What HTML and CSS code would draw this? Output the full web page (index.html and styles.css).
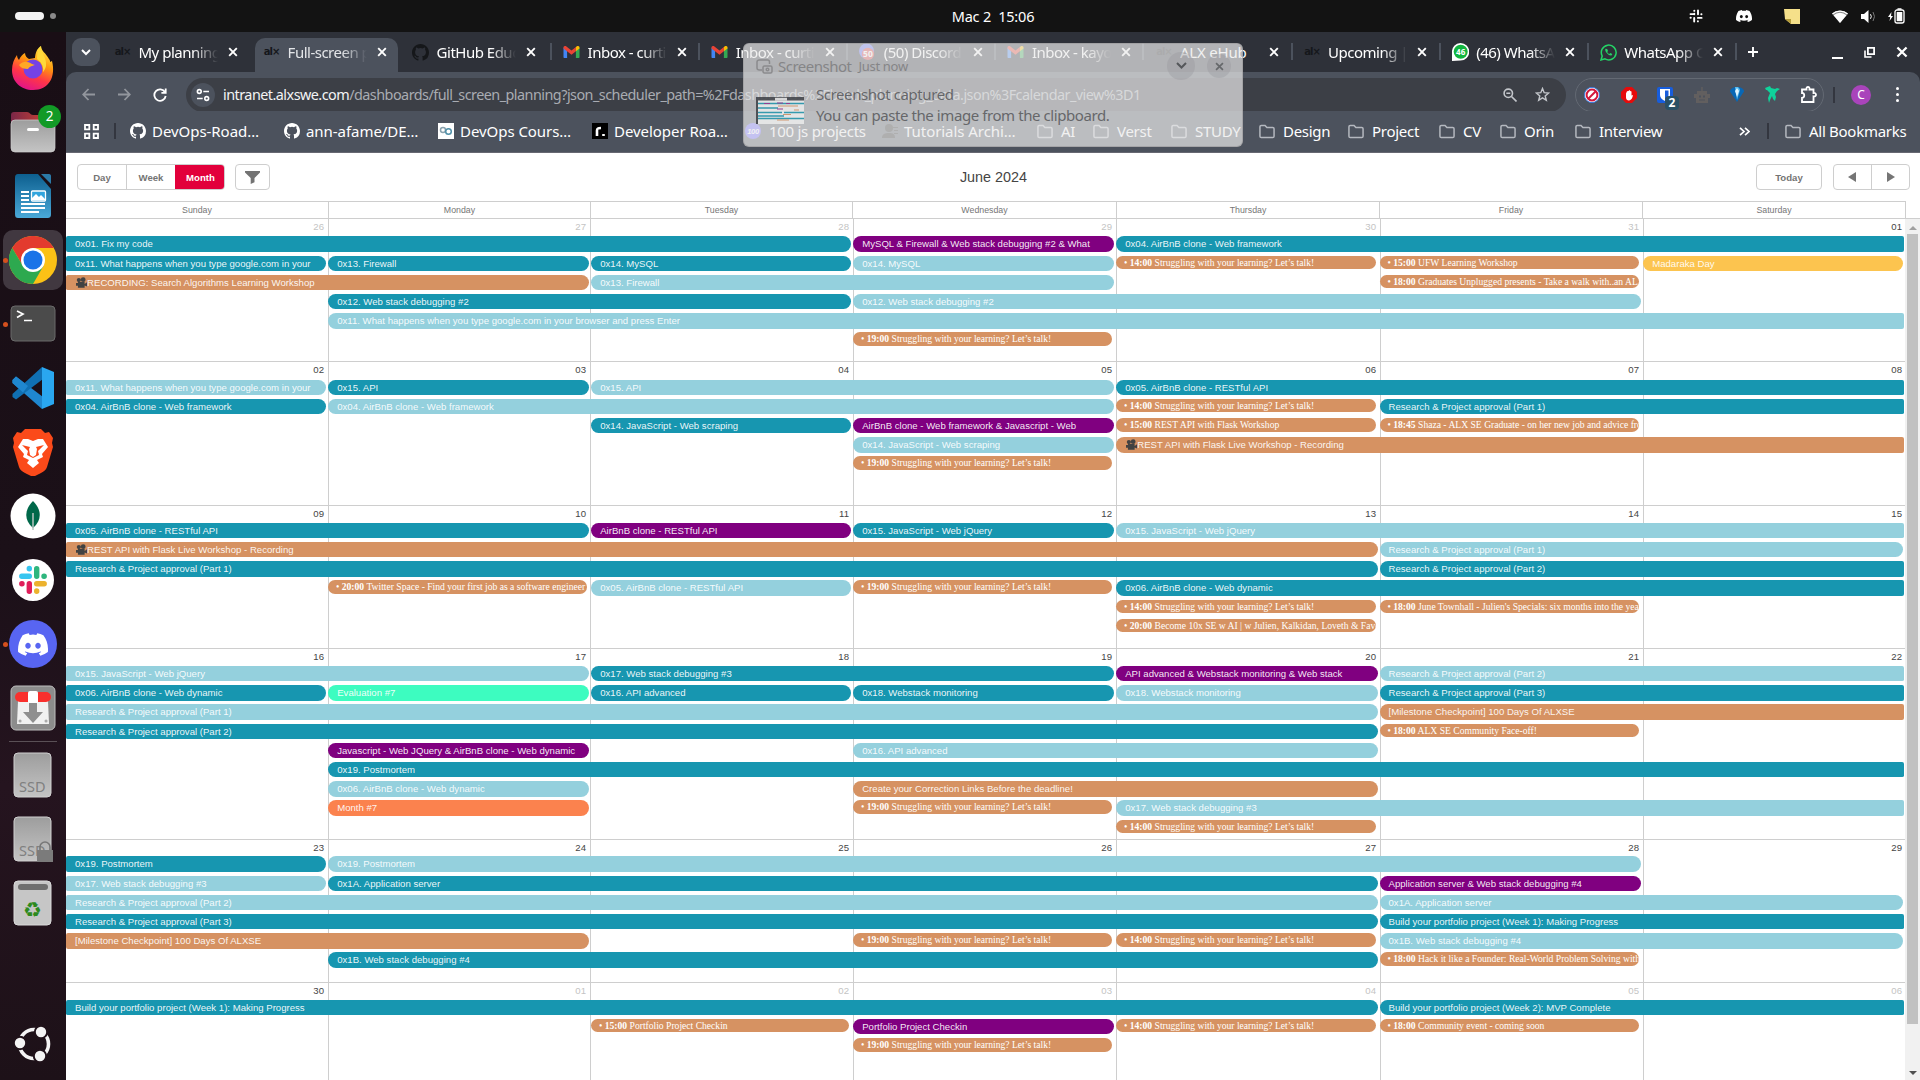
FILE: index.html
```html
<!DOCTYPE html>
<html lang="en">
<head>
<meta charset="utf-8">
<title>Full-screen planning</title>
<link rel="stylesheet" href="styles.css">
</head>
<body>
<svg class="defs" width="0" height="0">
  <defs>
    <linearGradient id="ff" x1="0.8" y1="0" x2="0.4" y2="1"><stop offset="0" stop-color="#fff44f"/><stop offset=".4" stop-color="#ff980e"/><stop offset=".7" stop-color="#ff3647"/><stop offset="1" stop-color="#e31587"/></linearGradient>
    <linearGradient id="gray" x1="0" y1="0" x2="0" y2="1"><stop offset="0" stop-color="#9d9d9d"/><stop offset="1" stop-color="#c4c4c4"/></linearGradient>
    <linearGradient id="folderback" x1="0" y1="0" x2="1" y2="0"><stop offset="0" stop-color="#7b2748"/><stop offset="1" stop-color="#d9482f"/></linearGradient>
    <linearGradient id="writer" x1="0" y1="0" x2="0" y2="1"><stop offset="0" stop-color="#0d5f8f"/><stop offset="1" stop-color="#4aa9d8"/></linearGradient>
    <symbol id="x" viewBox="0 0 10 10"><path d="M1.2 1.2l7.6 7.6M8.8 1.2L1.2 8.8" stroke="currentColor" stroke-width="1.9" fill="none"/></symbol>
    <symbol id="folder" viewBox="0 0 17 15"><path d="M1 12.6V2.4c0-.8.6-1.4 1.4-1.4h4l2 2.2h6.2c.8 0 1.4.6 1.4 1.4v8c0 .8-.6 1.4-1.4 1.4H2.4c-.8 0-1.4-.6-1.4-1.4z" fill="none" stroke="#b4b8bf" stroke-width="1.6"/></symbol>
    <symbol id="github" viewBox="0 0 16 16"><path fill="currentColor" d="M8 0C3.58 0 0 3.58 0 8c0 3.54 2.29 6.53 5.47 7.59.4.07.55-.17.55-.38 0-.19-.01-.82-.01-1.49-2.01.37-2.53-.49-2.69-.94-.09-.23-.48-.94-.82-1.13-.28-.15-.68-.52-.01-.53.63-.01 1.08.58 1.23.82.72 1.21 1.87.87 2.33.66.07-.52.28-.87.51-1.07-1.78-.2-3.64-.89-3.64-3.95 0-.87.31-1.59.82-2.15-.08-.2-.36-1.02.08-2.12 0 0 .67-.21 2.2.82a7.6 7.6 0 014 0c1.53-1.04 2.2-.82 2.2-.82.44 1.1.16 1.92.08 2.12.51.56.82 1.27.82 2.15 0 3.07-1.87 3.75-3.65 3.95.29.25.54.73.54 1.48 0 1.07-.01 1.93-.01 2.2 0 .21.15.46.55.38A8.01 8.01 0 0016 8c0-4.42-3.58-8-8-8z"/></symbol>
    <symbol id="gmail" viewBox="0 0 16 12"><path fill="#4285f4" d="M0 1.6V11c0 .6.4 1 1 1h2.6V4.4z"/><path fill="#34a853" d="M16 1.6V11c0 .6-.4 1-1 1h-2.600V4.400z"/><path fill="#ea4335" d="M0 1.600C0 .2 1.500-.5 2.600.3L8 4.500 12.400 1v4.200L8 8.700 0 2.500z"/><path fill="#fbbc04" d="M12.400 1l1-.7C14.500-.5 16 .2 16 1.600v.9l-3.600 2.700z"/></symbol>
    <symbol id="discord" viewBox="0 0 24 18"><path fill="currentColor" fill-rule="evenodd" d="M20.300 1.500A19.700 19.700 0 0015.400 0l-.7 1.300a18.300 18.300 0 00-5.400 0L8.600 0a19.700 19.700 0 00-4.900 1.500C.6 6.100-.3 10.600.1 15a19.900 19.900 0 006 3l1.300-2-2-1 .5-.400a14.200 14.200 0 0012.200 0l.5.400-2 1 1.300 2a19.900 19.900 0 006-3c.5-5.200-.8-9.700-3.600-13.500zM8 12.300c-1.200 0-2.200-1.100-2.200-2.400s1-2.400 2.200-2.400 2.200 1.100 2.200 2.400-1 2.400-2.200 2.400zm8 0c-1.200 0-2.200-1.100-2.200-2.400s1-2.400 2.200-2.400 2.200 1.100 2.200 2.400-1 2.400-2.200 2.400z"/></symbol>
    <symbol id="ssd" viewBox="0 0 40 46"><rect x="1" y="1" width="37" height="44" rx="4" fill="url(#gray)" stroke="#d0d0d0"/></symbol>
  </defs>
</svg>

<header class="topbar">
  <div class="spaces"><i class="pill"></i><i class="dot"></i></div>
  <div class="clock">Mac 2&nbsp; 15:06</div>
  <div class="tray">
    <svg width="14" height="14" viewBox="0 0 14 14" fill="none" stroke="#fff" stroke-width="1.900" stroke-linecap="round"><path d="M5.300 4.800V5.300M5.300 1.600v.3M1.500 5.100h3.800M9 1.500v3.800M12.300 5.200h.2M8.900 8.900h3.700M8.900 12.200v.2M5.200 8.900v3.700M1.500 8.800h.3"/></svg>
    <svg class="t-discord" width="16" height="12"><use href="#discord"/></svg>
    <svg class="t-note" width="16" height="15" viewBox="0 0 16 15"><path d="M0 0h16v15H7l-6-5z" fill="#f5e08a"/><path d="M1 10h6v5z" fill="#b49c3b"/></svg>
    <svg class="t-wifi" width="16" height="13" viewBox="0 0 16 13"><path d="M0 3.500a12 12 0 0116 0L8 13z" fill="#888"/><path d="M1.500 5.300a9.500 9.500 0 0113 0L8 13z" fill="#fff"/><path d="M0 3.500a12 12 0 0116 0l-.9 1.100a10.500 10.500 0 00-14.200 0z" fill="#fff"/></svg>
    <svg class="t-vol" width="15" height="13" viewBox="0 0 15 13"><path d="M0 4h3l4.500-4v13L3 9H0z" fill="#fff"/><path d="M9.500 4.200q1.600 2.300 0 4.600" stroke="#fff" fill="none"/><path d="M12 2q3 4.500 0 9" stroke="#777" fill="none"/></svg>
    <svg class="t-bat" width="17" height="16" viewBox="0 0 17 16"><path d="M3.500 4L0 9h2.200l-.7 4L5 8H3z" fill="#fff"/><rect x="7" y="2" width="9" height="13" rx="2" fill="none" stroke="#fff" stroke-width="1.300"/><rect x="8.700" y="4" width="5.600" height="9.200" fill="#fff"/><path d="M9.500 1h4" stroke="#fff" stroke-width="1.500"/></svg>
  </div>
</header>

<div class="desktop">
<aside class="dock">
  <div class="app"><svg width="46" height="46" viewBox="0 0 46 46"><path d="M23 45C11 45 2 37 2 25c0-6 2-11 5-15 0 2 1 4 2 5 1-3 4-6 6-7 0 3 2 5 4 6l6-1C25 9 27 3 31 1c0 5 5 7 8 13 1 1 1 2 1 3l2-1c4 16-3 29-19 29z" fill="url(#ff)"/><circle cx="23" cy="24" r="9.500" fill="#7542e5"/><path d="M9 20c4-4 8-4 13-1l3 1c-3 1-5 1-7 4-4 0-7-1-9-4z" fill="#ffa826"/><path d="M31 1c0 8 6 11 5 20-1 4-3 6-3 6 1-6-2-10-6-13 0-5 1-10 4-13z" fill="#ffd93b"/></svg></div>
  <div class="app"><svg width="46" height="42" viewBox="0 4 46 42"><path d="M1 24V8c0-2 1-3 3-3h13c3 0 3 3 6 3h18c2 0 3 2 3 3v13z" fill="url(#folderback)"/><rect x="1" y="13" width="44" height="32" rx="4" fill="url(#gray)" stroke="#cfcfcf" stroke-width=".7"/><rect x="17" y="21" width="12" height="3" rx="1.500" fill="#fff"/></svg><b class="count">2</b></div>
  <div class="app"><svg width="38" height="46" viewBox="0 0 38 46"><path d="M4 1h20l13 15v25c0 3-1 4-4 4H4c-2 0-3-1-3-4V5c0-3 1-4 3-4z" fill="url(#writer)"/><path d="M27 1h8c1.500 0 2 1 2 2v8z" fill="#2b7aa8"/><path d="M7 19h8M7 23h8M7 27h8M7 31h24M7 35h24M7 39h18" stroke="#fff" stroke-width="2"/><rect x="17.500" y="18" width="14" height="10" rx="1" fill="#33a5dd" stroke="#fff" stroke-width="1.300"/><path d="M18 27v-2l4-4 3 3 2-2 4 4v1z" fill="#fff"/></svg></div>
  <div class="app running active"><svg width="48" height="48" viewBox="0 0 48 48"><circle cx="24" cy="24" r="24" fill="#fbc116"/><path d="M24 12h20.800A24 24 0 003.200 12L14 30z" fill="#e33b2e"/><path d="M3.200 12A24 24 0 0024 48l10.400-18H14z" fill="#2da94f"/><circle cx="24" cy="24" r="12" fill="#fff"/><circle cx="24" cy="24" r="9.500" fill="#1a73e8"/></svg></div>
  <div class="app running"><svg width="46" height="38" viewBox="0 0 46 38"><rect x="1" y="1" width="44" height="35" rx="4" fill="#4b4b4b" stroke="#6a6a6a"/><path d="M7 6l6 3-6 3.500M14 15.500h8" stroke="#fff" stroke-width="1.700" fill="none"/></svg></div>
  <div class="app"><svg width="44" height="44" viewBox="0 0 44 44"><path d="M5 10.500L1.500 14v3L31 43l1-12z" fill="#1f87cf"/><path d="M31 1L1.500 28v3L5 33.500 32 13z" fill="#1070b3"/><path d="M5 10.500L1.500 14v3L12 26.500l5-6.500z" fill="#1f87cf"/><path d="M31 1l12 5v32l-12 5z" fill="#2aa7f0"/></svg></div>
  <div class="app"><svg width="42" height="48" viewBox="0 0 42 48"><path d="M13 1h16l4 4 4-1 4 6-1 5 1 4-6 20c-1 3-3 4-6 6l-8 4-8-4c-3-2-5-3-6-6L1 19l1-4-1-5 4-6 4 1z" fill="#fb4a1a"/><path d="M21 13l-5-2-5 0-5 8 6 7-1 3 6 3-2 3 6 5 6-5-2-3 6-3-1-3 6-7-5-8h-5z" fill="#fff"/><path d="M10 17l8 2-1 2 1 6 3 2 3-2 1-6-1-2 8-2-6 6 1 4-6 3-6-3 1-4z" fill="#fb4a1a"/><path d="M18 20h6l-1 7-2 1-2-1z" fill="#fff"/></svg></div>
  <div class="app"><svg width="46" height="46" viewBox="0 0 46 46"><circle cx="23" cy="23" r="22.500" fill="#fff"/><path d="M23 8c9 9 9 19 0 27-9-8-9-18 0-27z" fill="#00684a"/><path d="M23 20v17" stroke="#b8c4c2" stroke-width="1.500"/></svg></div>
  <div class="app"><svg width="42" height="42" viewBox="0 0 42 42"><circle cx="21" cy="21" r="21" fill="#fff"/><g stroke-width="5.400" stroke-linecap="round"><path d="M17.300 9.500v.2M9.800 17.300h7.500" stroke="#36c5f0"/><path d="M24.700 9.800v7.500M32 17.300h.2" stroke="#2eb67d"/><path d="M24.700 24.700h7.500M24.700 32v.2" stroke="#ecb22e"/><path d="M17.300 24.700v7.500M9.800 24.700h.2" stroke="#e01e5a"/></g></svg></div>
  <div class="app running"><svg width="48" height="48" viewBox="0 0 48 48"><circle cx="24" cy="24" r="24" fill="#5865f2"/><svg x="9" y="13" width="30" height="23" color="#fff"><use href="#discord"/></svg></svg></div>
  <div class="app"><svg width="46" height="46" viewBox="0 0 46 46"><rect x="1" y="1" width="44" height="44" rx="5" fill="#8c8c8c" stroke="#bdbdbd"/><path d="M8 16h30l1 23H7z" fill="#f1f1f1"/><rect x="5" y="7" width="36" height="10" rx="5" fill="#f9302d"/><rect x="18" y="6" width="10" height="13" rx="2" fill="#fff"/><path d="M19 18h8v9h6L23 38 13 27h6z" fill="#8f8f8f"/><path d="M10 36h.1M36 36h.1" stroke="#aaa" stroke-width="3" stroke-linecap="round"/></svg></div>
  <hr>
  <div class="app first"><svg width="40" height="46"><use href="#ssd"/><text x="6" y="40" class="ssd">SSD</text></svg></div>
  <div class="app"><svg width="40" height="46"><use href="#ssd"/><text x="6" y="40" class="ssd">SSD</text><path d="M27 35v-4a5 5 0 0110 0v4" fill="none" stroke="#777" stroke-width="1.600"/><path d="M24 34h16v12H24z" fill="#7b7b7b"/></svg></div>
  <div class="app"><svg width="40" height="46" viewBox="0 0 40 46"><rect x="1" y="1" width="37" height="44" rx="4" fill="#c6c6c6" stroke="#dadada"/><rect x="5" y="4" width="30" height="6" rx="3" fill="#6f6f6f"/><text x="19.500" y="37" class="recycle">♻</text></svg></div>
  <div class="app apps-grid"><svg width="38" height="38" viewBox="0 0 38 38"><circle cx="20" cy="19" r="14.500" fill="none" stroke="#f4f4f4" stroke-width="3.600"/><g fill="#f4f4f4" stroke="#20121a" stroke-width="2"><circle cx="6" cy="18" r="6.200"/><circle cx="27" cy="7" r="6.200"/><circle cx="26" cy="31" r="6.200"/></g></svg></div>
</aside>

<main class="browser">
  <div class="tabs">
    <div class="tabdrop"><svg width="10" height="7" viewBox="0 0 10 7"><path d="M1 1l4 4 4-4" fill="none" stroke="#fff" stroke-width="2"/></svg></div>
    <div class="tab"><span class="alx">al×</span><span class="tt">My planning</span><svg class="close"><use href="#x"/></svg></div>
    <div class="tab on"><span class="alx">al×</span><span class="tt">Full-screen p</span><svg class="close"><use href="#x"/></svg></div>
    <div class="tab nosep"><svg class="fav dark" width="17" height="17"><use href="#github"/></svg><span class="tt">GitHub Educ</span><svg class="close"><use href="#x"/></svg></div>
    <div class="tab"><svg class="fav" width="15" height="12"><use href="#gmail"/></svg><span class="tt">Inbox - curtis</span><svg class="close"><use href="#x"/></svg></div>
    <div class="tab"><svg class="fav" width="15" height="12"><use href="#gmail"/></svg><span class="tt">Inbox - curtis</span><svg class="close"><use href="#x"/></svg></div>
    <div class="tab"><svg class="fav" width="18" height="18" viewBox="0 0 18 18"><circle cx="8" cy="8" r="8" fill="#5865f2"/><circle cx="9.500" cy="11" r="6.500" fill="#d83a3e"/><text x="9.500" y="14.500" class="n50">50</text></svg><span class="tt">(50) Discord</span><svg class="close"><use href="#x"/></svg></div>
    <div class="tab"><svg class="fav" width="15" height="12"><use href="#gmail"/></svg><span class="tt">Inbox - kayo</span><svg class="close"><use href="#x"/></svg></div>
    <div class="tab"><span class="alx">al×</span><span class="tt wide">ALX eHub</span><svg class="close"><use href="#x"/></svg></div>
    <div class="tab"><span class="alx">al×</span><span class="tt">Upcoming |</span><svg class="close"><use href="#x"/></svg></div>
    <div class="tab"><svg class="fav" width="17" height="18" viewBox="0 0 17 18"><path d="M8.500 0a8.500 8.500 0 110 17.500L0 18V9a8.500 8.500 0 018.500-9z" fill="#fff"/><circle cx="8.700" cy="8.800" r="7" fill="#12b53f"/><text x="8.700" y="12" class="n46">46</text></svg><span class="tt">(46) WhatsA</span><svg class="close"><use href="#x"/></svg></div>
    <div class="tab"><svg class="fav" width="17" height="17" viewBox="0 0 17 17"><path d="M1 16l1.200-4A7.400 7.400 0 115 14.900z" fill="none" stroke="#25d366" stroke-width="1.500"/><path d="M5.500 4.800c-1.600 2 3.500 8 6.200 6.500l.6-1.300-2-1-1 1c-1-.4-1.700-1.200-2.100-2.100l.8-.9-.8-2z" fill="#25d366"/></svg><span class="tt">WhatsApp C</span><svg class="close"><use href="#x"/></svg></div>
    <div class="tab plus"><svg width="12" height="12" viewBox="0 0 12 12"><path d="M6 1v10M1 6h10" stroke="#fff" stroke-width="1.900"/></svg></div>
    <div class="wins">
      <svg width="11" height="14" viewBox="0 0 11 14"><path d="M0 13h11" stroke="#fff" stroke-width="2"/></svg>
      <svg width="11" height="11" viewBox="0 0 11 11"><path d="M3.900.900h6.200v6.200H3.900z" fill="none" stroke="#fff" stroke-width="1.800"/><path d="M1 3.500V10h6.500" fill="none" stroke="#fff" stroke-width="1.600"/></svg>
      <svg width="12" height="12"><use href="#x"/></svg>
    </div>
  </div>

  <div class="nav">
    <div class="navbtns">
      <svg class="dim" width="13" height="13" viewBox="0 0 13 13"><path d="M6.500 1L1.200 6.500l5.300 5.500M1.200 6.500H13" /></svg>
      <svg class="dim" width="13" height="13" viewBox="0 0 13 13"><path d="M6.500 1l5.300 5.500L6.500 12M11.800 6.500H0"/></svg>
      <svg width="14" height="14" viewBox="0 0 14 14"><path d="M12 4.200A5.700 5.700 0 1012.700 8M12.700 .5v4.300H8.400"/></svg>
    </div>
    <div class="omnibox">
      <span class="site"><svg width="14" height="14" viewBox="0 0 14 14" fill="none" stroke="#fff" stroke-width="1.600"><circle cx="3.300" cy="3.500" r="1.900"/><path d="M7.300 3.500H13M1 10.500h5.700"/><circle cx="10.700" cy="10.500" r="1.900"/></svg></span>
      <span class="url"><b>intranet.alxswe.com</b>/dashboards/full_screen_planning?json_scheduler_path=%2Fdashboards%2Fbatch_planning_data.json%3Fcalendar_view%3D1</span>
      <svg class="mag" width="14" height="14" viewBox="0 0 14 14" fill="none" stroke="#c3c6cb" stroke-width="1.600"><circle cx="5.300" cy="5.300" r="4.200"/><path d="M8.500 8.500l5 5M3.300 5.300h4"/></svg>
      <svg class="star" width="15" height="15" viewBox="0 0 15 15"><path d="M7.500 1.500l1.700 4.200 4.500.3-3.500 2.900 1.100 4.400-3.800-2.400-3.800 2.400 1.100-4.400L1.300 6l4.500-.3z" fill="none" stroke="#c3c6cb" stroke-width="1.400"/></svg>
    </div>
    <div class="exts">
      <svg width="16" height="16" viewBox="0 0 16 16"><circle cx="8" cy="8" r="7.600" fill="#fff" stroke="#3b7de0"/><circle cx="8" cy="8" r="5.400" fill="#fff" stroke="#d2173c" stroke-width="2"/><path d="M4 12l8-8" stroke="#d2173c" stroke-width="2"/></svg>
      <svg width="16" height="16" viewBox="0 0 16 16"><path d="M5 0h6l5 5v6l-5 5H5l-5-5V5z" fill="#e60b0b"/><path d="M5 6.500v4c0 4 5.500 4 6.500-.5l.5-2-1.500.500V4.500L9.300 4 8.500 3 7.500 4 6 4.300z" fill="#fff"/></svg>
      <span class="bw"><svg width="16" height="16" viewBox="0 0 16 16"><rect width="16" height="16" rx="2" fill="#175ddc"/><path d="M3 2h10v6c0 3-2.500 5-5 6-2.500-1-5-3-5-6z" fill="#fff"/><path d="M8 3.500h3.500V8c0 2-1.500 3.500-3.500 4.500z" fill="#175ddc"/></svg><b>2</b></span>
      <svg width="16" height="16" viewBox="0 0 16 16" fill="#625f5f"><path d="M7.300 0h1.400v4h4.300v3h3v4h-2v5H2v-5H0V7h3V4h4.300z"/><path d="M5 8.500h2v2H5zM9 8.500h2v2H9zM5 12.500h6v1H5z" fill="#4c525d"/></svg>
      <svg width="14" height="15" viewBox="0 0 14 15"><path d="M7 0c4 0 7 2 7 4.500L7 15 0 4.500C0 2 3 0 7 0z" fill="#0867b5"/><path d="M5 0q4-1 5 3L7 13z" fill="#58bdf0"/><path d="M7 1l2 3-2 6-2-6z" fill="#dff4ff"/></svg>
      <svg width="15" height="17" viewBox="0 0 15 17"><path d="M0 2l5-2 1 2 4 1 2-1 3 1-3 2-2 3 1 3-1 4-2-2-1-3-2 4-1 3-1-5 2-5-3-3H1z" fill="#0fd39b"/></svg>
      <svg width="17" height="17" viewBox="0 0 17 17"><path d="M2 3.500h4.500C6.300 1.700 7 1 8 1s1.700.7 1.500 2.500H13.500V7c1.700-.2 2.500.600 2.500 1.700s-.8 2-2.500 1.700V16H2v-4.200c3 0 3-5 0-4.800z" fill="none" stroke="#fff" stroke-width="1.800"/></svg>
    </div>
    <i class="vsep"></i>
    <span class="avatar">C</span>
    <i class="dots"><i></i><i></i><i></i></i>
  </div>

  <div class="marks">
    <svg width="15" height="15" viewBox="0 0 15 15" fill="none" stroke="#fff" stroke-width="1.800"><path d="M1 1h4.300v4.300H1zM9.700 1H14v4.300H9.700zM1 9.700h4.300V14H1zM9.700 9.700H14V14H9.700z"/></svg>
    <i class="vsep"></i>
    <span class="m m6"><svg width="16" height="16"><use href="#github"/></svg>DevOps-Road…</span>
    <span class="m m6"><svg width="16" height="16"><use href="#github"/></svg>ann-afame/DE…</span>
    <span class="m m6"><svg width="16" height="16" viewBox="0 0 16 16"><path fill="#fff" d="M0 0h16v16H0z"/><circle cx="5" cy="7" r="2.500" fill="none" stroke="#8aa2ae" stroke-width="1.500"/><circle cx="10.500" cy="8.500" r="2.800" fill="none" stroke="#4f8fa8" stroke-width="1.500"/></svg>DevOps Cours…</span>
    <span class="m m6"><svg width="16" height="16" viewBox="0 0 16 16"><path d="M0 0h16v16H0z"/><path d="M5 13V7.500C5 5.500 6 5 9 5M11.500 11v2" stroke="#fff" stroke-width="2.600" fill="none"/></svg>Developer Roa…</span>
    <span class="m m8"><svg width="16" height="16" viewBox="0 0 16 16"><circle cx="8" cy="8" r="8" fill="#6a62ff"/><text x="8" y="11" class="n100">100</text></svg>100 js projects</span>
    <span class="m m6"><svg width="16" height="16" viewBox="0 0 16 16" fill="#222"><circle cx="7" cy="5" r="4"/><path d="M0 15c0-4 3-5 7-5s6 1 6 5zM11 4h5v1h-5zM12 7h4v1h-4zM12 10h4v1h-4z"/></svg>Tutorials Archi…</span>
    <span class="m m8"><svg width="16" height="15"><use href="#folder"/></svg>AI</span>
    <span class="m m8"><svg width="16" height="15"><use href="#folder"/></svg>Verst</span>
    <span class="m m8"><svg width="16" height="15"><use href="#folder"/></svg>STUDY</span>
    <span class="m m8"><svg width="16" height="15"><use href="#folder"/></svg>Design</span>
    <span class="m m8"><svg width="16" height="15"><use href="#folder"/></svg>Project</span>
    <span class="m m8"><svg width="16" height="15"><use href="#folder"/></svg>CV</span>
    <span class="m m8"><svg width="16" height="15"><use href="#folder"/></svg>Orin</span>
    <span class="m m8"><svg width="16" height="15"><use href="#folder"/></svg>Interview</span>
    <svg class="more" width="11" height="9" viewBox="0 0 11 9"><path d="M1 .8l4 3.700-4 3.700M6 .8l4 3.700-4 3.700" fill="none" stroke="#fff" stroke-width="1.700"/></svg>
    <i class="vsep"></i>
    <span class="m m8"><svg width="16" height="15"><use href="#folder"/></svg>All Bookmarks</span>
  </div>

  <section class="page">
    <div class="tools">
      <div class="seg"><span>Day</span><span>Week</span><span class="sel">Month</span></div>
      <div class="btn filter"><svg width="15" height="13" viewBox="0 0 15 13"><path d="M0 0h15v1.500L9.500 7v4.200L5.700 13V7L0 1.500z" fill="#737373"/></svg></div>
      <h1>June 2024</h1>
      <div class="btn today">Today</div>
      <div class="seg arrows"><span><i class="la"></i></span><span><i class="ra"></i></span></div>
    </div>

    <div class="dayhead"><span>Sunday</span><span>Monday</span><span>Tuesday</span><span>Wednesday</span><span>Thursday</span><span>Friday</span><span>Saturday</span><span></span></div>

    <div class="scroll">
    <div class="weeks">
      <div class="week w1">
        <div class="cells"><span class="o">26</span><span class="o">27</span><span class="o">28</span><span class="o">29</span><span class="o">30</span><span class="o">31</span><span>01</span></div>
        <div class="events">
          <div class="ev teal fl c1 s3 r1">0x01. Fix my code</div>
          <div class="ev purple c4 s1 r1">MySQL &amp; Firewall &amp; Web stack debugging #2 &amp; What</div>
          <div class="ev teal fr c5 s3 r1">0x04. AirBnB clone - Web framework</div>
          <div class="ev teal fl c1 s1 r2">0x11. What happens when you type google.com in your</div>
          <div class="ev teal c2 s1 r2">0x13. Firewall</div>
          <div class="ev teal c3 s1 r2">0x14. MySQL</div>
          <div class="ev light c4 s1 r2">0x14. MySQL</div>
          <div class="tm c5 r2">• <b>14:00</b> Struggling with your learning? Let’s talk!</div>
          <div class="tm c6 r2">• <b>15:00</b> UFW Learning Workshop</div>
          <div class="ev yellow c7 s1 r2">Madaraka Day</div>
          <div class="ev orange fl c1 s2 r3"><svg class="cam" viewBox="0 0 12 11"><circle cx="3" cy="3" r="2.200"/><circle cx="7.500" cy="2.500" r="2.500"/><path d="M2 5h7v2l3-2v5L9 8.500V11H2zM0 6h2v3H0z"/></svg>RECORDING: Search Algorithms Learning Workshop</div>
          <div class="ev light c3 s2 r3">0x13. Firewall</div>
          <div class="tm c6 r3">• <b>18:00</b> Graduates Unplugged presents - Take a walk with..an ALX SE</div>
          <div class="ev teal c2 s2 r4">0x12. Web stack debugging #2</div>
          <div class="ev light c4 s3 r4">0x12. Web stack debugging #2</div>
          <div class="ev light fr c2 s6 r5">0x11. What happens when you type google.com in your browser and press Enter</div>
          <div class="tm c4 r6">• <b>19:00</b> Struggling with your learning? Let’s talk!</div>
        </div>
      </div>
      <div class="week w2">
        <div class="cells"><span>02</span><span>03</span><span>04</span><span>05</span><span>06</span><span>07</span><span>08</span></div>
        <div class="events">
          <div class="ev light fl c1 s1 r1">0x11. What happens when you type google.com in your</div>
          <div class="ev teal c2 s1 r1">0x15. API</div>
          <div class="ev light c3 s2 r1">0x15. API</div>
          <div class="ev teal fr c5 s3 r1">0x05. AirBnB clone - RESTful API</div>
          <div class="ev teal fl c1 s1 r2">0x04. AirBnB clone - Web framework</div>
          <div class="ev light c2 s3 r2">0x04. AirBnB clone - Web framework</div>
          <div class="tm c5 r2">• <b>14:00</b> Struggling with your learning? Let’s talk!</div>
          <div class="ev teal fr c6 s2 r2">Research &amp; Project approval (Part 1)</div>
          <div class="ev teal c3 s1 r3">0x14. JavaScript - Web scraping</div>
          <div class="ev purple c4 s1 r3">AirBnB clone - Web framework &amp; Javascript - Web</div>
          <div class="tm c5 r3">• <b>15:00</b> REST API with Flask Workshop</div>
          <div class="tm c6 r3">• <b>18:45</b> Shaza - ALX SE Graduate - on her new job and advice from</div>
          <div class="ev light c4 s1 r4">0x14. JavaScript - Web scraping</div>
          <div class="ev orange fr c5 s3 r4"><svg class="cam" viewBox="0 0 12 11"><circle cx="3" cy="3" r="2.200"/><circle cx="7.500" cy="2.500" r="2.500"/><path d="M2 5h7v2l3-2v5L9 8.500V11H2zM0 6h2v3H0z"/></svg>REST API with Flask Live Workshop - Recording</div>
          <div class="tm c4 r5">• <b>19:00</b> Struggling with your learning? Let’s talk!</div>
        </div>
      </div>
      <div class="week w3">
        <div class="cells"><span>09</span><span>10</span><span>11</span><span>12</span><span>13</span><span>14</span><span>15</span></div>
        <div class="events">
          <div class="ev teal fl c1 s2 r1">0x05. AirBnB clone - RESTful API</div>
          <div class="ev purple c3 s1 r1">AirBnB clone - RESTful API</div>
          <div class="ev teal c4 s1 r1">0x15. JavaScript - Web jQuery</div>
          <div class="ev light fr c5 s3 r1">0x15. JavaScript - Web jQuery</div>
          <div class="ev orange fl c1 s5 r2"><svg class="cam" viewBox="0 0 12 11"><circle cx="3" cy="3" r="2.200"/><circle cx="7.500" cy="2.500" r="2.500"/><path d="M2 5h7v2l3-2v5L9 8.500V11H2zM0 6h2v3H0z"/></svg>REST API with Flask Live Workshop - Recording</div>
          <div class="ev light c6 s2 r2">Research &amp; Project approval (Part 1)</div>
          <div class="ev teal fl c1 s5 r3">Research &amp; Project approval (Part 1)</div>
          <div class="ev teal fr c6 s2 r3">Research &amp; Project approval (Part 2)</div>
          <div class="tm c2 r4">• <b>20:00</b> Twitter Space - Find your first job as a software engineer</div>
          <div class="ev light c3 s1 r4">0x05. AirBnB clone - RESTful API</div>
          <div class="tm c4 r4">• <b>19:00</b> Struggling with your learning? Let’s talk!</div>
          <div class="ev teal fr c5 s3 r4">0x06. AirBnB clone - Web dynamic</div>
          <div class="tm c5 r5">• <b>14:00</b> Struggling with your learning? Let’s talk!</div>
          <div class="tm c6 r5">• <b>18:00</b> June Townhall - Julien's Specials: six months into the year</div>
          <div class="tm c5 r6">• <b>20:00</b> Become 10x SE w AI | w Julien, Kalkidan, Loveth &amp; Favour</div>
        </div>
      </div>
      <div class="week w4">
        <div class="cells"><span>16</span><span>17</span><span>18</span><span>19</span><span>20</span><span>21</span><span>22</span></div>
        <div class="events">
          <div class="ev light fl c1 s2 r1">0x15. JavaScript - Web jQuery</div>
          <div class="ev teal c3 s2 r1">0x17. Web stack debugging #3</div>
          <div class="ev purple c5 s1 r1">API advanced &amp; Webstack monitoring &amp; Web stack</div>
          <div class="ev light fr c6 s2 r1">Research &amp; Project approval (Part 2)</div>
          <div class="ev teal fl c1 s1 r2">0x06. AirBnB clone - Web dynamic</div>
          <div class="ev green c2 s1 r2">Evaluation #7</div>
          <div class="ev teal c3 s1 r2">0x16. API advanced</div>
          <div class="ev teal c4 s1 r2">0x18. Webstack monitoring</div>
          <div class="ev light c5 s1 r2">0x18. Webstack monitoring</div>
          <div class="ev teal fr c6 s2 r2">Research &amp; Project approval (Part 3)</div>
          <div class="ev light fl c1 s5 r3">Research &amp; Project approval (Part 1)</div>
          <div class="ev orange fr c6 s2 r3">[Milestone Checkpoint] 100 Days Of ALXSE</div>
          <div class="ev teal fl c1 s5 r4">Research &amp; Project approval (Part 2)</div>
          <div class="tm c6 r4">• <b>18:00</b> ALX SE Community Face-off!</div>
          <div class="ev purple c2 s1 r5">Javascript - Web JQuery &amp; AirBnB clone - Web dynamic</div>
          <div class="ev light c4 s2 r5">0x16. API advanced</div>
          <div class="ev teal fr c2 s6 r6">0x19. Postmortem</div>
          <div class="ev light c2 s1 r7">0x06. AirBnB clone - Web dynamic</div>
          <div class="ev orange c4 s2 r7">Create your Correction Links Before the deadline!</div>
          <div class="ev coral c2 s1 r8">Month #7</div>
          <div class="tm c4 r8">• <b>19:00</b> Struggling with your learning? Let’s talk!</div>
          <div class="ev light fr c5 s3 r8">0x17. Web stack debugging #3</div>
          <div class="tm c5 r9">• <b>14:00</b> Struggling with your learning? Let’s talk!</div>
        </div>
      </div>
      <div class="week w5">
        <div class="cells"><span>23</span><span>24</span><span>25</span><span>26</span><span>27</span><span>28</span><span>29</span></div>
        <div class="events">
          <div class="ev teal fl c1 s1 r1">0x19. Postmortem</div>
          <div class="ev light c2 s5 r1">0x19. Postmortem</div>
          <div class="ev light fl c1 s1 r2">0x17. Web stack debugging #3</div>
          <div class="ev teal c2 s4 r2">0x1A. Application server</div>
          <div class="ev purple c6 s1 r2">Application server &amp; Web stack debugging #4</div>
          <div class="ev light fl c1 s5 r3">Research &amp; Project approval (Part 2)</div>
          <div class="ev light c6 s2 r3">0x1A. Application server</div>
          <div class="ev teal fl c1 s5 r4">Research &amp; Project approval (Part 3)</div>
          <div class="ev teal fr c6 s2 r4">Build your portfolio project (Week 1): Making Progress</div>
          <div class="ev orange fl c1 s2 r5">[Milestone Checkpoint] 100 Days Of ALXSE</div>
          <div class="tm c4 r5">• <b>19:00</b> Struggling with your learning? Let’s talk!</div>
          <div class="tm c5 r5">• <b>14:00</b> Struggling with your learning? Let’s talk!</div>
          <div class="ev light c6 s2 r5">0x1B. Web stack debugging #4</div>
          <div class="ev teal c2 s4 r6">0x1B. Web stack debugging #4</div>
          <div class="tm c6 r6">• <b>18:00</b> Hack it like a Founder: Real-World Problem Solving with</div>
        </div>
      </div>
      <div class="week w6">
        <div class="cells"><span>30</span><span class="o">01</span><span class="o">02</span><span class="o">03</span><span class="o">04</span><span class="o">05</span><span class="o">06</span></div>
        <div class="events">
          <div class="ev teal fl c1 s5 r1">Build your portfolio project (Week 1): Making Progress</div>
          <div class="ev teal fr c6 s2 r1">Build your portfolio project (Week 2): MVP Complete</div>
          <div class="tm c3 r2">• <b>15:00</b> Portfolio Project Checkin</div>
          <div class="ev purple c4 s1 r2">Portfolio Project Checkin</div>
          <div class="tm c5 r2">• <b>14:00</b> Struggling with your learning? Let’s talk!</div>
          <div class="tm c6 r2">• <b>18:00</b> Community event - coming soon</div>
          <div class="tm c4 r3">• <b>19:00</b> Struggling with your learning? Let’s talk!</div>
        </div>
      </div>
    </div>
    <div class="scrollbar"><i class="up"></i><i class="thumb"></i><i class="down"></i></div>
    </div>
  </section>
</main>
</div>

<div class="toast">
  <div class="toast-head">
    <svg width="17" height="15" viewBox="0 0 17 15" fill="none" stroke="#8b8b8d" stroke-width="1.500"><path d="M6 11H3.500C2 11 1 10.500 1 9V3c0-1.500 1-2 2.500-2h8C13 1 13.500 2 13.500 3v2"/><rect x="7" y="7" width="9" height="7" rx="1.500"/><circle cx="11.500" cy="10.500" r="1.300"/></svg>
    <span class="app-name">Screenshot</span><span class="when">Just now</span>
    <span class="round"><svg width="11" height="8" viewBox="0 0 11 8"><path d="M1 1l4.500 4.500L10 1" fill="none" stroke="#55575a" stroke-width="2"/></svg></span>
    <span class="round small"><svg width="9" height="9" color="#66686b"><use href="#x"/></svg></span>
  </div>
  <div class="toast-body">
    <svg class="thumbnail" width="48" height="27" viewBox="0 0 48 27"><path fill="#ececec" d="M0 0h48v27H0z"/><path fill="#3c3f45" d="M0 0h48v3.500H0zM0 0h2v27H0z"/><path fill="#d9d9da" d="M19 .800h12v3H19z"/><path stroke="#1e94ac" stroke-width="1.300" d="M2 6.500h46M2 11h20M2 15.500h24M28 15.500h20M2 19h26M2 21.500h46"/><path stroke="#8a2a8c" d="M21 6h6M8 6.500h6M21 12h6M30 6.500h4"/><path stroke="#d69262" stroke-width="1.200" d="M22 9h20M27 17.500h8M21 23h12M38 13h5"/></svg>
    <p>Screenshot captured<br>You can paste the image from the clipboard.</p>
  </div>
</div>
</body>
</html>
```
FILE: styles.css
```css
* { box-sizing: border-box; }
body {
  margin: 0; width: 1920px; height: 1080px; overflow: hidden;
  font-family: "Noto Sans", sans-serif; font-size: 15px; color: #fff;
  background: #131313; display: flex; flex-direction: column; position: relative;
}
.defs { position: absolute; }
svg { display: block; flex: none; }

/* top bar */
.topbar { height: 32px; display: grid; grid-template-columns: 900px 186px 1fr; align-items: center; flex: none; }
.spaces { display: flex; align-items: center; gap: 6px; padding-left: 15px; }
.pill { width: 29px; height: 8px; border-radius: 4px; background: #f4f4f4; }
.dot { width: 6px; height: 6px; border-radius: 3px; background: #8a8a8a; }
.clock { text-align: center; font-size: 14.5px; letter-spacing: -.2px; line-height: 18px; padding-bottom: 1px; }
.tray { display: flex; align-items: center; padding-left: 603px; }
.t-discord { margin-left: 33px; }
.t-note { margin-left: 32px; }
.t-wifi { margin-left: 32px; }
.t-vol { margin-left: 13px; }
.t-bat { margin-left: 12px; }

.desktop { display: flex; flex: 1; min-height: 0; }

/* dock */
.dock {
  width: 66px; flex: none; display: flex; flex-direction: column; align-items: stretch; padding-top: 4px;
  background: linear-gradient(#190e15, #1b1018 50%, #25141f 72%, #1d1118);
}
.app { height: 64px; flex: none; display: flex; align-items: center; justify-content: center; position: relative; }
.app.active { height: 60px; margin: 2px 3px; border-radius: 10px; background: #413840; }
.app.running::before { content: ""; position: absolute; left: 3px; top: 50%; width: 5px; height: 5px; margin-top: -2px; border-radius: 50%; background: #d4501e; }
.app.active::before { left: 0; }
.dock hr { width: 48px; height: 1px; border: 0; margin: 1px auto 0; background: #5a5056; flex: none; }
.app.first { height: 65px; }
.apps-grid { margin-top: auto; margin-bottom: 4px; }
.count { position: absolute; left: 38px; top: 5px; width: 23px; height: 23px; border-radius: 50%; background: #129a26; font-size: 13.5px; font-weight: 400; line-height: 23px; text-align: center; }
.ssd { font: 14.5px "Noto Sans", sans-serif; fill: #808080; }
.recycle { font: 21px "DejaVu Sans", sans-serif; fill: #2c8a1e; text-anchor: middle; }

/* tabs */
.browser { flex: 1; display: flex; flex-direction: column; min-width: 0; background: #2e3139; }
.tabs { height: 40px; display: flex; align-items: stretch; flex: none; }
.tabdrop { width: 28px; height: 28px; margin: 6px 7px 0 6px; border-radius: 9px; background: #4c525d; display: flex; align-items: center; justify-content: center; flex: none; }
.tab { width: 148.100px; flex: none; display: flex; align-items: center; padding-left: 7px; }
.tab > .fav, .tab > .alx { width: 17px; margin-right: 7.500px; flex: none; }
.fav.dark { color: #15171a; }
.alx { font: bold 10px "DejaVu Sans", sans-serif; letter-spacing: -1px; color: #15171b; line-height: 38px; text-align: center; }
.tt { width: 79px; overflow: hidden; white-space: nowrap; letter-spacing: -.5px; line-height: 22px; padding-bottom: 1px; -webkit-mask-image: linear-gradient(90deg, #000 68%, transparent); mask-image: linear-gradient(90deg, #000 68%, transparent); }
.tt.wide { -webkit-mask-image: none; mask-image: none; letter-spacing: -.2px; }
.close { width: 10px; height: 10px; margin-left: 10px; }
.tab:nth-child(n+5) { border-image: linear-gradient(transparent 11px, #4c525d 11px, #4c525d 28px, transparent 28px) 1; border-width: 0 0 0 2px; border-style: solid; padding-left: 11px; }
.tab.on { width: 143px; margin: 6px 0 0; padding: 0 0 6px 8px; background: #4c525d; border-radius: 10px 10px 0 0; }
.tab.on .tt { color: #e3e5e8; }
.tab.on .alx { line-height: 28px; }
.tab.nosep { width: 152px; padding-left: 14px; }
.tab.plus { width: 40px; padding-left: 10px; }
.wins { margin-left: auto; display: flex; align-items: center; gap: 21px; padding-right: 12px; }

/* navigation bar */
.nav { height: 39px; flex: none; display: flex; align-items: center; background: #4c525d; border-radius: 10px 10px 0 0; padding-top: 6px; }
.navbtns { width: 120px; display: flex; gap: 22.500px; padding-left: 16px; align-items: center; }
.navbtns svg { fill: none; stroke: #fff; stroke-width: 1.800; }
.navbtns .dim { stroke: #92969d; }
.omnibox { width: 1380px; height: 34px; border-radius: 17px; background: #3c3f46; display: flex; align-items: center; padding-left: 5px; }
.site { width: 24px; height: 24px; border-radius: 12px; background: #4c525d; display: flex; align-items: center; justify-content: center; margin-right: 8px; }
.url { width: 1280px; color: #a9acb2; white-space: nowrap; font-size: 14.400px; letter-spacing: -.53px; line-height: 20px; }
.url b { font-weight: 400; color: #f3f4f5; }
.star { margin-left: 18px; }
.exts { width: 249px; height: 34px; margin-left: 9px; border: 1px solid #636973; border-radius: 17px; display: flex; align-items: center; justify-content: space-between; padding: 0 6px 0 8px; }
.bw { position: relative; }
.bw b { position: absolute; left: 8px; top: 9px; width: 14px; height: 14px; border-radius: 4px; background: #2a5064; font-size: 12px; line-height: 14px; text-align: center; }
.vsep { width: 2px; height: 16px; background: #33363f; display: block; }
.nav .vsep { margin-left: 9px; }
.avatar { width: 20px; height: 20px; border-radius: 10px; background: #a944bb; margin-left: 16px; font-size: 12px; line-height: 20px; text-align: center; }
.dots { display: flex; flex-direction: column; gap: 3px; margin-left: 25px; }
.dots i { width: 3px; height: 3px; border-radius: 2px; background: #fff; }

/* bookmarks */
.marks {
  height: 42px; flex: none; background: #4c525d; border-bottom: 1px solid #676872; padding: 0 0 1px 18px; align-items: center; display: grid;
  grid-template-columns: 30px 16px 154px 154px 154px 153px 137px 155px 56px 78px 88px 89px 91px 61px 75px 163px 29px 18px 135px;
}
.m { display: flex; align-items: center; white-space: nowrap; letter-spacing: -.28px; line-height: 20px; }
.m6 { gap: 6px; letter-spacing: -.05px; }
.m8 { gap: 8px; }
.more { margin-left: 1px; }
.n50 { font: bold 9px "Open Sans", sans-serif; fill: #fff; text-anchor: middle; }
.n46 { font: bold 8px "Open Sans", sans-serif; fill: #fff; text-anchor: middle; }
.n100 { font: italic bold 7.500px "Liberation Sans", sans-serif; fill: #fff; text-anchor: middle; }

/* page */
.page { flex: 1; min-height: 0; background: #fff; color: #454545; font-family: "Liberation Sans", Arial, sans-serif; font-size: 9.600px; display: flex; flex-direction: column; }
.tools { height: 48px; flex: none; display: flex; align-items: center; padding: 0 11px; }
.seg, .btn { height: 26px; border: 1px solid #cecece; border-radius: 4px; display: flex; align-items: center; justify-content: center; font-weight: 700; color: #747473; background: #fff; flex: none; overflow: hidden; }
.seg span { width: 49px; height: 26px; display: flex; align-items: center; justify-content: center; border-left: 1px solid #cecece; }
.seg span:first-child { border-left: 0; width: 48px; }
.seg .sel { background: #e2003b; color: #fff; border-color: #e2003b; width: 50px; margin-right: -1px; }
.filter { width: 35px; margin-left: 10px; }
.tools h1 { flex: 1; margin: 0; padding-left: 40px; text-indent: -79px; text-align: center; font-size: 14.400px; font-weight: 400; color: #454544; }
.today { width: 66px; margin-right: 11px; }
.arrows span { width: 38px; }
.arrows span:first-child { width: 37px; padding-right: 1px; }
.arrows { margin-right: -1px; }
.la, .ra { width: 0; height: 0; border: 5px solid transparent; }
.la { border-right: 8px solid #757575; border-left: 0; }
.ra { border-left: 8px solid #757575; border-right: 0; }

.dayhead { height: 17px; flex: none; display: grid; grid-template-columns: 262px 262px 262px 264px 263px 263px 263px 1px; border-top: 1px solid #cecece; font-size: 8.800px; color: #767676; line-height: 17px; text-align: center; width: 1840px; }
.dayhead span + span { border-left: 1px solid #cecece; }
.scroll { flex: 1; min-height: 0; display: flex; }
.weeks { width: 1839px; overflow: hidden; flex: none; }
.week { display: grid; border-top: 1px solid #cecece; }
.cells, .events { grid-area: 1 / 1; }
.cells { display: grid; grid-template-columns: 262px 262px 263px 263px 264px 263px 262px; text-align: right; line-height: 15px; }
.cells span { padding-right: 4px; }
.cells span:last-child { padding-right: 3px; }
.cells span + span { border-left: 1px solid #cecece; }
.cells .o { color: #c4c4c4; }
.events { display: grid; grid-template-columns: 262px 263px 262px 263px 264px 263px 262px; grid-auto-rows: 19.200px; align-content: start; align-items: start; }
.w1 { height: 143px; } .w1 .events { padding-top: 17.400px; }
.w2 { height: 144px; } .w2 .events { padding-top: 17.600px; }
.w3 { height: 143px; } .w3 .events { padding-top: 16.800px; }
.w4 { height: 191px; } .w4 .events { padding-top: 17px; }
.w5 { height: 143px; } .w5 .events { padding-top: 16.400px; }
.w6 { height: 99px; } .w6 .events { padding-top: 16.600px; }

.c1 { --c: 1; } .c2 { --c: 2; } .c3 { --c: 3; } .c4 { --c: 4; } .c5 { --c: 5; } .c6 { --c: 6; } .c7 { --c: 7; }
.s1 { --s: 1; } .s2 { --s: 2; } .s3 { --s: 3; } .s4 { --s: 4; } .s5 { --s: 5; } .s6 { --s: 6; }
.r1 { grid-row: 1; } .r2 { grid-row: 2; } .r3 { grid-row: 3; } .r4 { grid-row: 4; } .r5 { grid-row: 5; }
.r6 { grid-row: 6; } .r7 { grid-row: 7; } .r8 { grid-row: 8; } .r9 { grid-row: 9; }
.ev, .tm { grid-column: var(--c) / span var(--s, 1); color: #fff; white-space: nowrap; overflow: hidden; }
.ev { height: 15.400px; line-height: 15.800px; margin-right: 2px; padding-left: 9.200px; border-radius: 8px; color: rgba(255, 255, 255, .92); }
.ev.c6 { padding-left: 8.500px; }
.ev.fl { border-top-left-radius: 2px; border-bottom-left-radius: 2px; padding-left: 9px; }
.ev.fr { border-top-right-radius: 2px; border-bottom-right-radius: 2px; margin-right: 1px; }
.tm { height: 13.600px; line-height: 13.200px; margin-right: 4px; padding-left: 8px; border-radius: 7px; background: #d69262; font-family: "Liberation Serif", "Times New Roman", serif; }
.tm.c6 { padding-left: 7.500px; }
.teal { background: #1796b0; }
.light { background: #94d0dd; }
.orange { background: #d69262; }
.purple { background: #800080; }
.yellow { background: #fcc44f; }
.green { background: #3dfcc0; }
.coral { background: #fb824e; }
.cam { width: 11.500px; height: 11px; fill: #424242; display: inline-block; vertical-align: -2px; margin-left: .6px; }

.scrollbar { width: 15px; background: #f1f1f1; border-top: 1px solid #cecece; display: flex; flex-direction: column; align-items: center; }
.scrollbar i { display: block; }
.up { margin-top: 7px; border: 4px solid transparent; border-top: 0; border-bottom-color: #a0a0a0; }
.thumb { width: 11px; height: 790px; margin-top: 4px; background: #c1c1c1; }
.down { margin-top: 47px; border: 4px solid transparent; border-bottom: 0; border-top-color: #505050; }

/* notification */
.toast { position: absolute; left: 743px; top: 43px; width: 500px; height: 104px; border-radius: 6px; background: rgba(235, 235, 235, .7); border: 1px solid rgba(150, 150, 152, .6); color: #66676a; padding: 6px 11px 0 12px; }
.toast-head { display: flex; align-items: center; height: 32px; }
.app-name { margin-left: 5px; color: #858587; font-size: 15px; letter-spacing: -.5px; }
.when { margin-left: 7px; color: #858587; font-size: 13px; letter-spacing: -.3px; }
.round { width: 28px; height: 28px; border-radius: 14px; background: rgba(150, 150, 155, .35); display: flex; align-items: center; justify-content: center; margin-left: auto; }
.round.small { width: 24px; height: 24px; margin-left: 12px; }
.toast-body { display: flex; margin-top: 2px; }
.thumbnail { margin-top: 13px; opacity: .85; }
.toast-body p { margin: 0 0 0 12px; line-height: 21px; white-space: nowrap; letter-spacing: -.42px; }
```
